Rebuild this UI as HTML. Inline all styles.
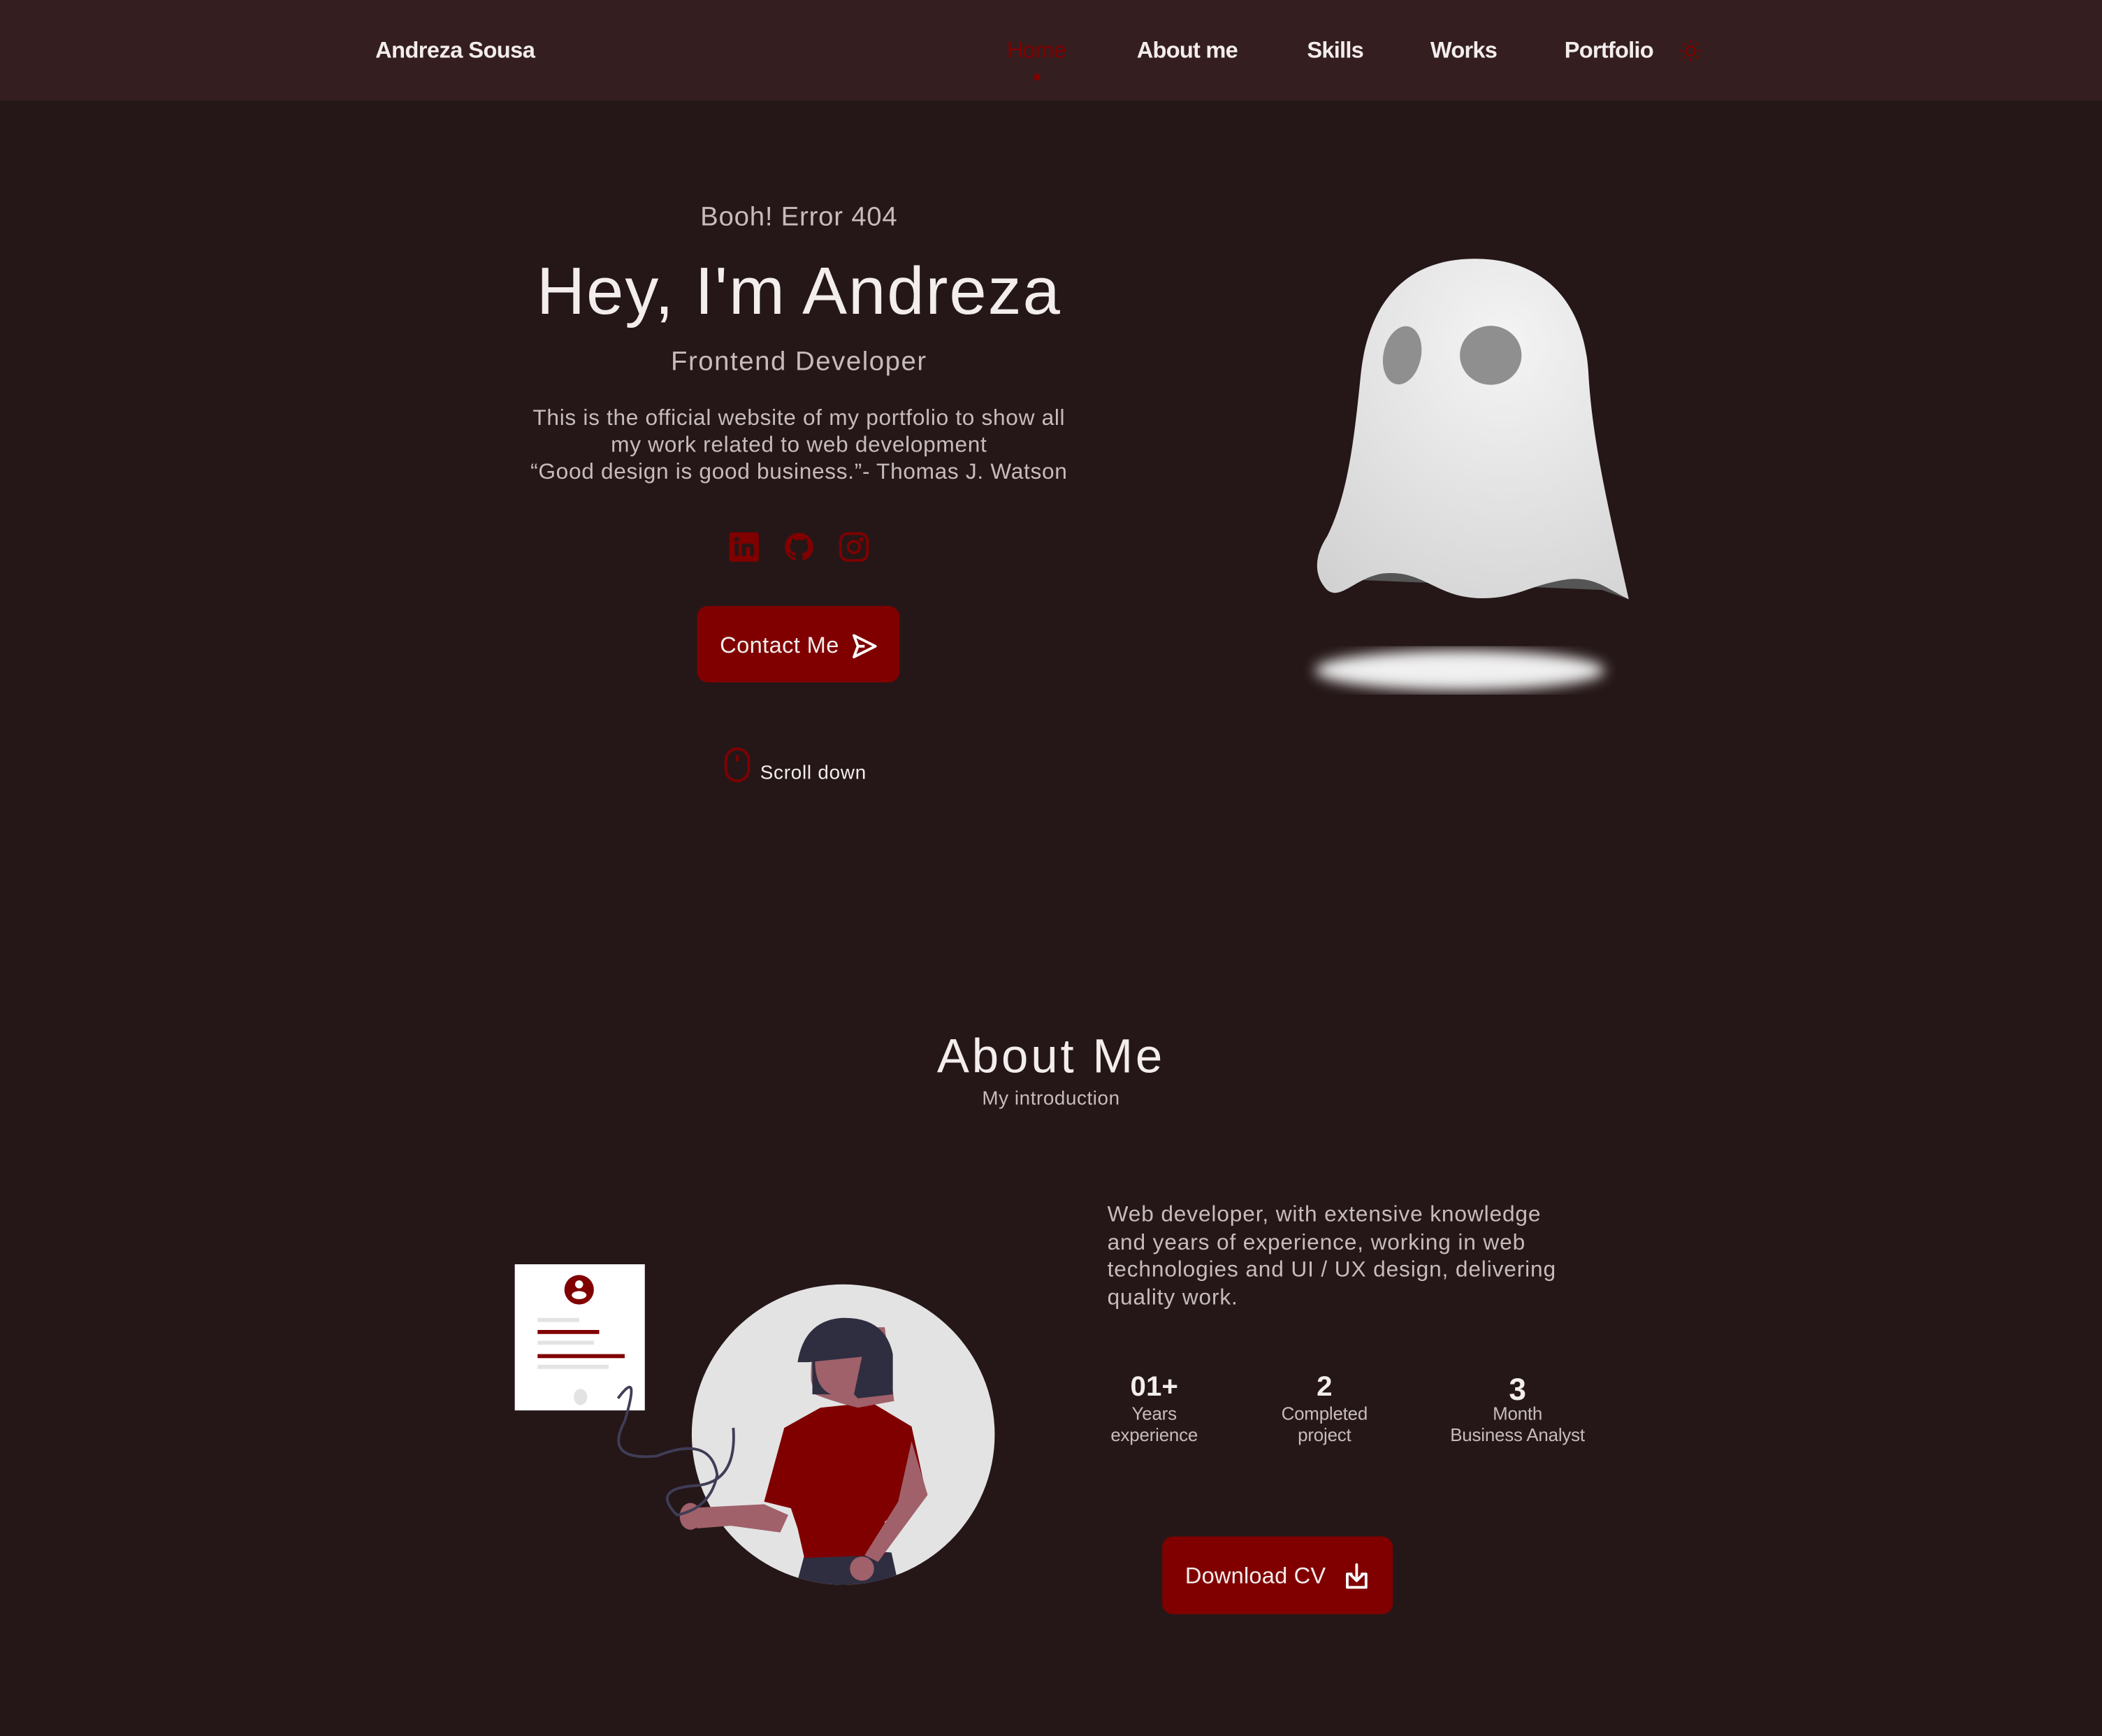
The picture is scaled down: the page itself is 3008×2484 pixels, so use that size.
<!DOCTYPE html>
<html><head><meta charset="utf-8"><style>
html,body{margin:0;padding:0;background:#251718;overflow:hidden}
body{width:3008px;height:2484px}
#w{position:absolute;left:0;top:0;width:1568px;height:1295px;transform:scale(1.91837);transform-origin:0 0;font-family:"Liberation Sans",sans-serif;color:#f3eded}
.a{position:absolute;white-space:nowrap}
.c{text-align:center;transform:translateX(-50%)}
.g{color:#c7bbbc}
</style></head><body><div id="w">
<div class="a" style="left:0;top:0;width:1568px;height:75px;background:#351e1f"></div>
<div class="a" style="left:280px;top:28px;font-size:17px;font-weight:bold;letter-spacing:-0.3px">Andreza Sousa</div>
<div class="a" style="left:751px;top:28px;font-size:17px;color:#800000;letter-spacing:-0.3px">Home</div>
<div class="a" style="left:771px;top:55px;width:5px;height:5px;border-radius:50%;background:#800000"></div>
<div class="a" style="left:848px;top:28px;font-size:17px;font-weight:bold;letter-spacing:-0.4px">About me</div>
<div class="a" style="left:975px;top:28px;font-size:17px;font-weight:bold;letter-spacing:-0.4px">Skills</div>
<div class="a" style="left:1067px;top:28px;font-size:17px;font-weight:bold;letter-spacing:-0.4px">Works</div>
<div class="a" style="left:1167px;top:28px;font-size:17px;font-weight:bold;letter-spacing:-0.4px">Portfolio</div>
<svg class="a" style="left:1252px;top:29px" width="18" height="18" viewBox="0 0 18 18" fill="none" stroke="#800000" stroke-width="1.3"><circle cx="9" cy="9" r="3.5"/><path d="M9 1v2M9 15v2M1 9h2M15 9h2M3.3 3.3l1.4 1.4M13.3 13.3l1.4 1.4M3.3 14.7l1.4-1.4M13.3 4.7l1.4-1.4"/></svg>

<div class="a c g" style="left:596px;top:151px;font-size:20px;letter-spacing:0.4px">Booh! Error 404</div>
<div class="a c" style="left:596px;top:188px;font-size:50px;letter-spacing:1px">Hey, I'm Andreza</div>
<div class="a c g" style="left:596px;top:259px;font-size:20px;letter-spacing:0.8px">Frontend Developer</div>
<div class="a c g" style="left:596px;top:302px;font-size:16.5px;line-height:20px;letter-spacing:0.35px">This is the official website of my portfolio to show all<br>my work related to web development<br>“Good design is good business.”- Thomas J. Watson</div>

<svg class="a" style="left:543px;top:396px" width="24" height="24" viewBox="0 0 24 24"><rect x="1" y="1" width="22" height="22" rx="2" fill="#800000"/><rect x="5" y="9.5" width="3" height="9" fill="#251718"/><circle cx="6.5" cy="6.3" r="1.8" fill="#251718"/><path d="M10.5 9.5h3v1.4c.6-1 1.8-1.6 3-1.6 2.4 0 3 1.5 3 3.7v5.5h-3v-5c0-1.1-.3-1.8-1.3-1.8s-1.7.7-1.7 1.8v5h-3z" fill="#251718"/></svg>
<svg class="a" style="left:584px;top:396px" width="24" height="24" viewBox="0 0 24 24"><path fill="#800000" d="M12 1.5A10.5 10.5 0 0 0 8.7 22c.5.1.7-.2.7-.5v-2c-2.9.6-3.5-1.3-3.500-1.3-.5-1.2-1.2-1.5-1.2-1.5-1-.7.1-.6.1-.6 1 .1 1.6 1.1 1.6 1.1.9 1.6 2.5 1.1 3.1.9.1-.7.4-1.1.7-1.4-2.3-.3-4.8-1.2-4.8-5.2 0-1.1.4-2.1 1.1-2.8-.1-.3-.5-1.3.1-2.8 0 0 .9-.3 2.9 1.1a10 10 0 0 1 5.2 0c2-1.4 2.9-1.1 2.9-1.1.6 1.5.2 2.5.1 2.8.7.7 1.1 1.7 1.1 2.8 0 4-2.5 4.9-4.8 5.2.4.3.7 1 .7 1.9v2.9c0 .3.2.6.7.5A10.5 10.5 0 0 0 12 1.5z"/></svg>
<svg class="a" style="left:625px;top:396px" width="24" height="24" viewBox="0 0 24 24" fill="none" stroke="#800000" stroke-width="2"><rect x="2" y="2" width="20" height="20" rx="5.5"/><circle cx="12" cy="12" r="4.3"/><circle cx="17.5" cy="6.5" r=".8" fill="#800000"/></svg>

<div class="a" style="left:520px;top:452px;width:151px;height:57px;border-radius:8px;background:#800000"></div>
<div class="a" style="left:537px;top:472px;font-size:17px;letter-spacing:0.2px">Contact Me</div>
<svg class="a" style="left:635px;top:472px" width="20" height="20" viewBox="0 0 20 20" fill="none" stroke="#fff" stroke-width="2" stroke-linejoin="round"><path d="M2 2l16 8-16 8 3-8z"/><path d="M5 10h5"/></svg>

<svg class="a" style="left:540px;top:557px" width="20" height="27" viewBox="0 0 20 27" fill="none" stroke="#800000" stroke-width="2"><rect x="1.5" y="1.5" width="17" height="24" rx="8.5"/><path d="M10 7v3" stroke-linecap="round"/></svg>
<div class="a" style="left:567px;top:569px;font-size:14.5px;letter-spacing:0.4px">Scroll down</div>

<svg class="a" style="left:960px;top:180px" width="280" height="360" viewBox="960 180 280 360">
<defs><radialGradient id="gh" cx="0.6" cy="0.25" r="0.9"><stop offset="0" stop-color="#f4f4f4"/><stop offset="1" stop-color="#d2d2d2"/></radialGradient><filter id="bl"><feGaussianBlur stdDeviation="5"/></filter></defs>
<path d="M1000 432 Q1030 420 1060 424 Q1090 428 1110 440 Q1140 430 1175 430 Q1200 436 1215 447 L1195 440 Z" fill="#555"/>
<path d="M1100 193 C1160 193 1183 235 1185 280 C1188 330 1200 380 1215 447 C1200 440 1190 430 1170 432 C1140 436 1130 448 1100 446 C1070 444 1060 424 1030 428 C1010 432 1000 448 990 440 C980 430 980 415 990 400 C1005 370 1010 330 1015 280 C1020 230 1045 193 1100 193 Z" fill="url(#gh)"/>
<ellipse cx="1046" cy="265" rx="14" ry="22" fill="#8f8f8f" transform="rotate(12 1046 265)"/>
<ellipse cx="1112" cy="265" rx="23" ry="22" fill="#8f8f8f"/>
<ellipse cx="1089" cy="500" rx="108" ry="15" fill="#f0f0f0" filter="url(#bl)"/>
</svg>

<div class="a c" style="left:784px;top:767px;font-size:36px;letter-spacing:2px">About Me</div>
<div class="a c g" style="left:784px;top:812px;font-size:14.5px;letter-spacing:0.3px">My introduction</div>

<svg class="a" style="left:370px;top:930px" width="390" height="260" viewBox="370 930 390 260">
<defs><clipPath id="cp"><path d="M370 930H760V1100H370Z"/><ellipse cx="629" cy="1070" rx="113" ry="112"/></clipPath></defs>
<ellipse cx="629" cy="1070" rx="113" ry="112" fill="#e3e3e3"/>
<rect x="384" y="943" width="97" height="109" fill="#fff"/>
<ellipse cx="432" cy="962" rx="11" ry="11" fill="#800000"/>
<circle cx="432" cy="958" r="3" fill="#fff"/><ellipse cx="432" cy="966" rx="5.5" ry="3" fill="#fff"/>
<rect x="401" y="983" width="31" height="3" fill="#e3e3e3"/>
<rect x="401" y="992" width="46" height="3" fill="#800000"/>
<rect x="401" y="1000" width="42" height="3" fill="#e3e3e3"/>
<rect x="401" y="1010" width="65" height="3" fill="#800000"/>
<rect x="401" y="1018" width="53" height="3" fill="#e3e3e3"/>
<ellipse cx="433" cy="1042" rx="5" ry="6" fill="#e3e3e3"/>
<g clip-path="url(#cp)">
<path d="M600 1160 Q630 1155 665 1158 L672 1190 L592 1190 Z" fill="#2f2e41"/>
<path d="M612 1050 L650 1046 L680 1064 L690 1110 L660 1135 L660 1160 L600 1162 L595 1140 L590 1125 L570 1120 L585 1065 Z" fill="#800000"/>
<path d="M680 1075 L692 1115 L655 1165 L645 1160 L670 1120 Z" fill="#a0616a"/>
<circle cx="643" cy="1170" r="9" fill="#a0616a"/>
<path d="M605 1030 Q604 1000 615 990 L660 990 L667 1045 L640 1050 Q620 1045 608 1040 Z" fill="#a0616a"/>
<path d="M595 1016 Q600 985 628 983 Q660 982 666 1010 L666 1040 L640 1043 L637 1040 L643 1012 L603 1016 Z" fill="#2f2e41"/>
<path d="M606 1015 L606 1040 L620 1040 Q608 1035 608 1015 Z" fill="#2f2e41"/>
</g>
<path d="M510 1125 L570 1122 L588 1130 L582 1143 L545 1138 L520 1140 Z" fill="#a0616a"/>
<ellipse cx="515" cy="1131" rx="8" ry="10" fill="#a0616a"/>
<path d="M461 1043 Q478 1020 466 1060 Q450 1090 490 1086 Q530 1070 535 1100 Q530 1125 505 1130 Q485 1110 520 1108 Q550 1105 547 1065" fill="none" stroke="#3f3d56" stroke-width="2"/>
</svg>

<div class="a g" style="left:826px;top:896px;font-size:16.5px;line-height:20.5px;letter-spacing:0.45px">Web developer, with extensive knowledge<br>and years of experience, working in web<br>technologies and UI / UX design, delivering<br>quality work.</div>
<div class="a c" style="left:861px;top:1023px;font-size:21px;font-weight:bold">01+</div>
<div class="a c g" style="left:861px;top:1047px;font-size:13.5px;line-height:16px;letter-spacing:-0.1px">Years<br>experience</div>
<div class="a c" style="left:988px;top:1023px;font-size:21px;font-weight:bold">2</div>
<div class="a c g" style="left:988px;top:1047px;font-size:13.5px;line-height:16px;letter-spacing:-0.1px">Completed<br>project</div>
<div class="a c" style="left:1132px;top:1023px;font-size:23px;font-weight:bold">3</div>
<div class="a c g" style="left:1132px;top:1047px;font-size:13.5px;line-height:16px;letter-spacing:-0.1px">Month<br>Business Analyst</div>

<div class="a" style="left:867px;top:1146px;width:172px;height:58px;border-radius:8px;background:#800000"></div>
<div class="a" style="left:884px;top:1166px;font-size:17px;letter-spacing:0.1px">Download CV</div>
<svg class="a" style="left:1002px;top:1165px" width="20" height="22" viewBox="0 0 20 22" fill="none" stroke="#fff" stroke-width="2" stroke-linecap="round" stroke-linejoin="round"><path d="M6 9H3v10h14V9h-3"/><path d="M10 2v12M6 10l4 4 4-4"/></svg>
</div></body></html>
